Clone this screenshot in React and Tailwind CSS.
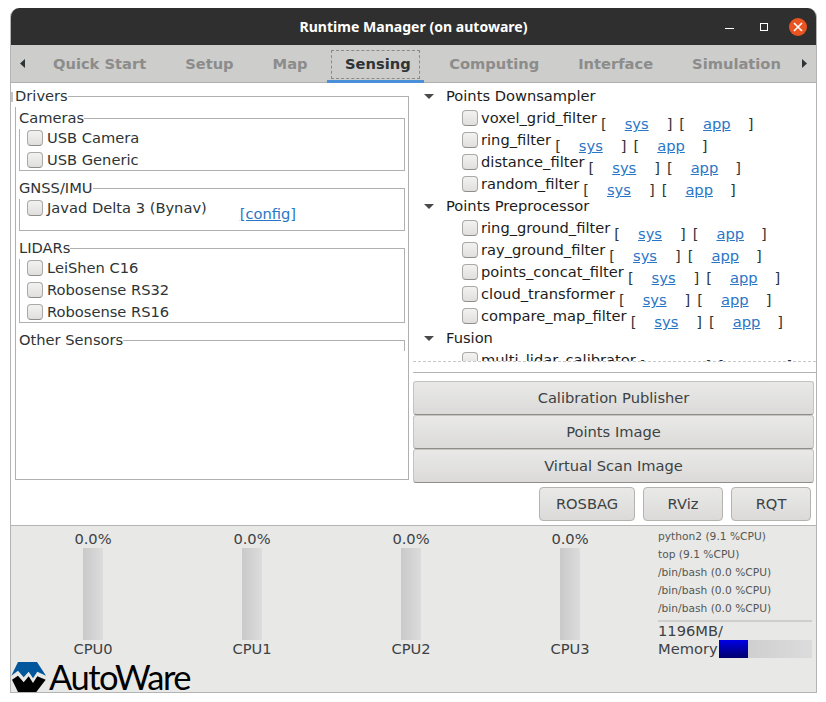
const font = "font-['DejaVu_Sans',sans-serif]"

const tabs = ['Quick Start', 'Setup', 'Map', 'Sensing', 'Computing', 'Interface', 'Simulation']

const groups = [
  {
    name: 'Points Downsampler',
    items: ['voxel_grid_filter', 'ring_filter', 'distance_filter', 'random_filter'],
  },
  {
    name: 'Points Preprocessor',
    items: ['ring_ground_filter', 'ray_ground_filter', 'points_concat_filter', 'cloud_transformer', 'compare_map_filter'],
  },
  {
    name: 'Fusion',
    items: ['multi_lidar_calibrator'],
  },
]

const Check = () => (
  <span className="h-[16px] w-[16px] shrink-0 rounded-[4px] border border-[#aaa9a5] border-b-[#8f8e8a] bg-gradient-to-b from-[#f2f2f1] to-[#e0dfdd]" />
)

const Box = ({ title, className, legendClass = '-ml-px', children }) => (
  <fieldset className={`border border-[#b0b0b0] ${className}`}>
    <legend className={`leading-[22px] text-[#2e3436] ${legendClass}`}>{title}</legend>
    {children}
  </fieldset>
)

const DriverRow = ({ label }) => (
  <div className="flex h-[22px] items-center gap-[4px] pl-[7px] text-[#2e3436]">
    <Check />
    <span>{label}</span>
  </div>
)

const Link = ({ children }) => <span className="text-[#2a76c6] underline">{children}</span>

const FilterRow = ({ label }) => (
  <div className="flex h-[22px] items-center pl-[49px] text-[#1c1c1c]">
    <Check />
    <span className="ml-[3px]">{label}</span>
    <span className="ml-[4px] mt-[12px] flex whitespace-pre text-[#2e3436]">
      <span>[</span>
      <span className="ml-[18px]"><Link>sys</Link></span>
      <span className="ml-[18px]">]</span>
      <span className="ml-[7px]">[</span>
      <span className="ml-[18px]"><Link>app</Link></span>
      <span className="ml-[17px]">]</span>
    </span>
  </div>
)

const WideButton = ({ children }) => (
  <button className="h-[34px] w-[401px] rounded-[3px] border border-[#c4c3bf] border-b-[#8e8d89] bg-gradient-to-b from-[#e9e9e8] to-[#dbdad8] text-[#3d4244]">
    {children}
  </button>
)

const SmallButton = ({ className, children }) => (
  <button className={`h-[34px] rounded-[4px] border border-[#b4b3af] bg-gradient-to-b from-[#e9e9e8] to-[#dbdad8] text-[#3d4244] ${className}`}>
    {children}
  </button>
)

const Cpu = ({ name }) => (
  <div className="flex w-[159px] flex-col items-center pt-[4px] text-[#3d4244]">
    <span className="leading-[18px]">0.0%</span>
    <div className="h-[92px] w-[20px] bg-gradient-to-r from-[#c9c9c9] to-[#dcdcdc]" />
    <span className="leading-[18px]">{name}</span>
  </div>
)

const Logo = () => (
  <div className="flex h-[30px] items-center">
    <svg width="36" height="30" viewBox="0 0 36 30" className="shrink-0">
      <path d="M7 0H26L35 13.700L26.300 9.700L22 16.300L17.700 9.700L12.700 15.300L7 8.700L0.300 13.700Z" fill="#02579c" />
      <path d="M1 17.700L7 13.700L12.700 20.300L17.700 14.300L22 21L26.300 14.300L34.700 17.700L25.300 30H7Z" fill="#000" />
    </svg>
    <span className="ml-[2px] font-['Lato',sans-serif] text-[34.500px] leading-[30px] tracking-[-1.500px] text-black">AutoWare</span>
  </div>
)

export default function App() {
  return (
    <div className={`min-h-[702px] bg-white pl-[10px] pt-[8px] text-[14.667px] ${font}`}>
      <div className="flex h-[685px] w-[807px] flex-col overflow-hidden rounded-t-[9px] border-x border-b border-[#b4b4b4]">
        {/* title bar */}
        <div className="-mx-px flex h-[37px] shrink-0 items-center bg-[#302f2f]">
          <div className="w-[100px]" />
          <div className="flex-1 text-center font-['Noto_Sans',sans-serif] text-[14.050px] font-bold text-white">
            Runtime Manager (on autoware)
          </div>
          <div className="flex w-[100px] items-center pl-[8px]">
            <span className="mt-[4px] h-[1px] w-[9px] bg-white" />
            <span className="ml-[26px] h-[8px] w-[8px] border border-white" />
            <span className="ml-[21px] flex h-[18px] w-[18px] items-center justify-center rounded-full bg-[#e95420]">
              <svg width="10" height="10" viewBox="0 0 10 10">
                <path d="M1 1L9 9M9 1L1 9" stroke="#fff" strokeWidth="1.6" />
              </svg>
            </span>
          </div>
        </div>

        {/* tabs */}
        <div className="flex h-[38px] shrink-0 whitespace-nowrap border-b border-[#b0b0b0] bg-[#cdcdcc] font-bold">
          <div className="flex w-[22.500px] items-center pl-[9px]">
            <svg width="5" height="9" viewBox="0 0 5 9" className="shrink-0"><path d="M5 0V9L0 4.500Z" fill="#2e3436" /></svg>
          </div>
          {tabs.map(t => (
            t === 'Sensing' ? (
              <div key={t} className="relative mr-[6px] flex items-center pl-[18px] pr-[13px] text-[#2e3436]">
                <span className="absolute left-[4px] right-[4px] top-[5px] bottom-[3px] border border-dashed border-[#8a8a8a]" />
                {t}
                <span className="absolute bottom-[-1px] left-0 right-0 h-[3px] bg-[#4a90d9]" />
              </div>
            ) : (
              <div key={t} className="flex items-center px-[19.500px] text-[#8c8c8b]">{t}</div>
            )
          ))}
          <div className="ml-auto flex items-center pr-[9px]">
            <svg width="5" height="9" viewBox="0 0 5 9"><path d="M0 0V9L5 4.500Z" fill="#2e3436" /></svg>
          </div>
        </div>

        {/* main */}
        <div className="flex h-[443px] shrink-0 border-b border-[#b4b4b4] bg-white">
          <div className="relative w-[402px] shrink-0 pl-[4px] pt-[2px]">
            <span className="absolute left-0 top-[9px] h-[10px] w-[2px] bg-[#c4c4c4]" />
            <Box title="Drivers" legendClass="-ml-[4px]" className="h-[395px] w-[394px] px-[3px]">
              <Box title="Cameras" className="h-[64px]">
                <div className="-mt-[2px]">
                  <DriverRow label="USB Camera" />
                  <DriverRow label="USB Generic" />
                </div>
              </Box>
              <Box title="GNSS/IMU" className="mt-[6px] h-[54px]">
                <div className="-mt-[2px] flex">
                  <DriverRow label="Javad Delta 3 (Bynav)" />
                  <span className="ml-[33px] mt-[6px] leading-[22px] text-[#2a76c6] underline">[config]</span>
                </div>
              </Box>
              <Box title="LIDARs" className="mt-[6px] h-[86px]">
                <div className="-mt-[2px]">
                  <DriverRow label="LeiShen C16" />
                  <DriverRow label="Robosense RS32" />
                  <DriverRow label="Robosense RS16" />
                </div>
              </Box>
              <Box title="Other Sensors" className="mt-[6px] h-[20px] border-b-0" />
            </Box>
          </div>

          <div className="flex flex-1 flex-col">
            <div className="h-[279px] shrink-0 overflow-hidden border-b border-dashed border-[#c8c8c8] pt-[2px]">
              {groups.map(g => (
                <div key={g.name}>
                  <div className="flex h-[22px] items-center pl-[11px] text-[#1c1c1c]">
                    <svg width="10" height="5" viewBox="0 0 10 5"><path d="M0 0H10L5 5Z" fill="#4a4a4a" /></svg>
                    <span className="ml-[12px]">{g.name}</span>
                  </div>
                  {g.items.map(i => <FilterRow key={i} label={i} />)}
                </div>
              ))}
            </div>
            <div className="mt-[10px] border-t border-[#b4b4b4] pt-[8px]">
              <WideButton>Calibration Publisher</WideButton>
              <WideButton>Points Image</WideButton>
              <WideButton>Virtual Scan Image</WideButton>
            </div>
            <div className="flex justify-end gap-[8px] pr-[5px] pt-[4px]">
              <SmallButton className="w-[96px]">ROSBAG</SmallButton>
              <SmallButton className="w-[80px]">RViz</SmallButton>
              <SmallButton className="w-[80px]">RQT</SmallButton>
            </div>
          </div>
        </div>

        {/* status panel */}
        <div className="flex-1 bg-[#e8e8e7]">
          <div className="flex h-[132px] pl-[2.500px]">
            <Cpu name="CPU0" />
            <Cpu name="CPU1" />
            <Cpu name="CPU2" />
            <Cpu name="CPU3" />
            <div className="ml-[8.500px] w-[154px] pt-[2px] text-[#3d4244]">
              {['python2 (9.1 %CPU)', 'top (9.1 %CPU)', '/bin/bash (0.0 %CPU)', '/bin/bash (0.0 %CPU)', '/bin/bash (0.0 %CPU)'].map((p, i) => (
                <div key={i} className="text-[10.667px] leading-[18px] text-[#555753]">{p}</div>
              ))}
              <div className="mt-[2px] h-[2px] bg-[#cfcfcf]" />
              <div className="leading-[18px]">1196MB/</div>
              <div className="flex h-[18px] items-center">
                <span className="w-[61px] leading-[18px]">Memory</span>
                <div className="h-[18px] flex-1 bg-gradient-to-r from-[#c9c9c9] to-[#dcdcdc]">
                  <div className="h-full w-[29px] bg-gradient-to-b from-[#0000e6] to-[#00006e]" />
                </div>
              </div>
            </div>
          </div>
          <div className="mt-[4px]">
            <Logo />
          </div>
        </div>
      </div>
    </div>
  )
}
